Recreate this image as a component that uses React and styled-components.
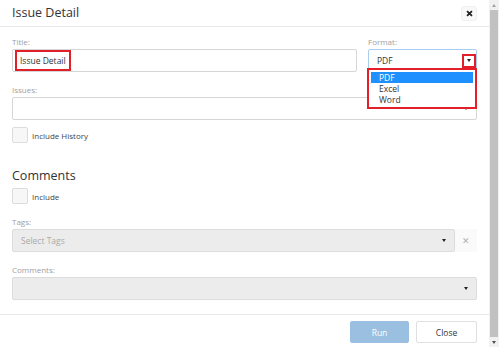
import React from "react";
import styled, { createGlobalStyle } from "styled-components";

const GlobalStyle = createGlobalStyle`
	html, body {
		margin: 0;
		padding: 0;
		background: #ffffff;
	}
	body {
		font-family: "Open Sans", "Liberation Sans", sans-serif;
		color: #333;
	}
`;

const Page = styled.div`
	display: flex;
	width: 499px;
	height: 347px;
	overflow: hidden;
`;

// Modal
const Modal = styled.div`
	flex: 1;
	display: flex;
	flex-direction: column;
	background: #fff;
`;

const Header = styled.div`
	display: flex;
	align-items: center;
	justify-content: space-between;
	height: 26px;
	padding: 0 12px;
	border-bottom: 1px solid #e8e8e8;
`;

const Heading = styled.div`
	font-size: 12.5px;
	line-height: 16px;
	color: #333;
	margin-top: ${(p) => p.$top || 0}px;
`;

const CloseBox = styled.button`
	display: flex;
	align-items: center;
	justify-content: center;
	width: 16px;
	height: 15px;
	padding: 0;
	border: 1px solid #f0f0f0;
	border-radius: 3px;
	background: #f8f8f8;
`;

const Body = styled.div`
	display: flex;
	flex-direction: column;
	padding: 10px 12px 14px;
	border-bottom: 1px solid #e8e8e8;
`;

const Row = styled.div`
	display: grid;
	grid-template-columns: ${(p) => p.$cols || "1fr"};
	column-gap: 11px;
	margin-top: ${(p) => p.$top || 0}px;
`;

const Field = styled.div`
	position: relative;
	display: flex;
	flex-direction: column;
`;

const Label = styled.div`
	font-size: 8px;
	line-height: 10px;
	color: #a0a0a0;
	margin-bottom: 2px;
`;

const Box = styled.div`
	position: relative;
	display: flex;
	align-items: center;
	box-sizing: border-box;
	height: 23px;
	padding: 0 8px;
	border: 1px solid ${(p) => (p.$focus ? "#a9cdee" : p.$disabled ? "#dcdcdc" : "#d6d6d6")};
	border-radius: 2px;
	background: ${(p) => (p.$disabled ? "#ececec" : "#fff")};
	font-size: 8.5px;
	color: ${(p) => (p.$disabled ? "#aaa" : "#333")};
`;

const Marked = styled.span`
	display: inline-flex;
	align-items: center;
	height: 21px;
	margin-left: -6px;
	padding: 0 3px 0 3px;
	box-sizing: border-box;
	border: 2px solid #e3202a;
`;

const Caret = styled.span`
	margin-left: auto;
	width: 0;
	height: 0;
	border-left: 2.5px solid transparent;
	border-right: 2.5px solid transparent;
	border-top: 3px solid #222;
`;

const CaretMark = styled.span`
	display: flex;
	align-items: center;
	justify-content: center;
	box-sizing: border-box;
	width: 14px;
	height: 14px;
	margin-left: auto;
	margin-right: -8px;
	border: 2px solid #e3202a;
	${Caret} {
		margin: 0;
	}
`;

const Menu = styled.div`
	position: absolute;
	left: -1px;
	right: 0;
	top: 31px;
	z-index: 2;
	display: flex;
	flex-direction: column;
	padding: 2px;
	border: 2px solid #e3202a;
	background: #fff;
`;

const Option = styled.div`
	height: 11px;
	padding-left: 8px;
	font-size: 8.5px;
	line-height: 11px;
	color: ${(p) => (p.$active ? "#fff" : "#333")};
	background: ${(p) => (p.$active ? "#1e90ff" : "transparent")};
`;

const Check = styled.label`
	display: flex;
	align-items: center;
	gap: 4px;
	margin-top: ${(p) => p.$top || 0}px;
	font-size: 8px;
	color: #444;
`;

const CheckBox = styled.span`
	box-sizing: border-box;
	width: 16px;
	height: 16px;
	border: 1px solid #dcdcdc;
	border-radius: 2px;
	background: #f7f7f7;
`;

const TagRow = styled.div`
	display: flex;
`;

const Clear = styled.div`
	display: flex;
	align-items: center;
	justify-content: center;
	width: 22px;
	height: 23px;
	background: #fafafa;
	color: #b0b0b0;
	font-size: 9px;
`;

const Footer = styled.div`
	display: flex;
	justify-content: flex-end;
	gap: 7px;
	padding: 6px 12px 0;
`;

const Button = styled.button`
	width: ${(p) => p.$w}px;
	height: 22px;
	padding: 0;
	border: 1px solid ${(p) => (p.$primary ? "#9bbfe0" : "#e0e0e0")};
	border-radius: 2px;
	background: ${(p) => (p.$primary ? "#9bbfe0" : "#fff")};
	color: ${(p) => (p.$primary ? "#fff" : "#333")};
	font-family: "Open Sans", "Liberation Sans", sans-serif;
	font-size: 8.5px;
`;

// Fake window scrollbar
const Scrollbar = styled.div`
	display: flex;
	flex-direction: column;
	align-items: center;
	width: 10px;
	background: #f1f1f1;
`;

const ScrollArrow = styled.div`
	display: flex;
	align-items: center;
	justify-content: center;
	height: 10px;
	&::after {
		content: "";
		border-left: 2.5px solid transparent;
		border-right: 2.5px solid transparent;
		${(p) =>
			p.$down
				? "border-top: 3px solid #505050;"
				: "border-bottom: 3px solid #a3a3a3;"}
	}
`;

const Thumb = styled.div`
	flex: 1;
	width: 8px;
	background: #c1c1c1;
`;

const XIcon = () => (
	<svg width="7" height="7" viewBox="0 0 10 10">
		<path d="M1.5 1.5 L8.5 8.5 M8.5 1.5 L1.5 8.5" stroke="#222" strokeWidth="2.6" />
	</svg>
);

const App = () => {
	return (
		<>
			<GlobalStyle />
			<Page>
				<Modal>
					<Header>
						<Heading>Issue Detail</Heading>
						<CloseBox>
							<XIcon />
						</CloseBox>
					</Header>

					<Body>
						<Row $cols="345px 1fr">
							<Field>
								<Label>Title:</Label>
								<Box>
									<Marked>Issue Detail</Marked>
								</Box>
							</Field>
							<Field>
								<Label>Format:</Label>
								<Box $focus>
									PDF
									<CaretMark>
										<Caret />
									</CaretMark>
								</Box>
								<Menu>
									<Option $active>PDF</Option>
									<Option>Excel</Option>
									<Option>Word</Option>
								</Menu>
							</Field>
						</Row>

						<Row $top={13}>
							<Field>
								<Label>Issues:</Label>
								<Box>
									<Caret />
								</Box>
							</Field>
						</Row>

						<Check $top={7}>
							<CheckBox />
							Include History
						</Check>

						<Heading $top={25}>Comments</Heading>

						<Check $top={4}>
							<CheckBox />
							Include
						</Check>

						<Row $top={13}>
							<Field>
								<Label>Tags:</Label>
								<TagRow>
									<Box $disabled style={{ flex: 1 }}>
										Select Tags
										<Caret />
									</Box>
									<Clear>✕</Clear>
								</TagRow>
							</Field>
						</Row>

						<Row $top={13}>
							<Field>
								<Label>Comments:</Label>
								<Box $disabled>
									<Caret />
								</Box>
							</Field>
						</Row>
					</Body>

					<Footer>
						<Button $primary $w={59}>
							Run
						</Button>
						<Button $w={61}>Close</Button>
					</Footer>
				</Modal>

				<Scrollbar>
					<ScrollArrow />
					<Thumb />
					<ScrollArrow $down />
				</Scrollbar>
			</Page>
		</>
	);
};

export default App;
